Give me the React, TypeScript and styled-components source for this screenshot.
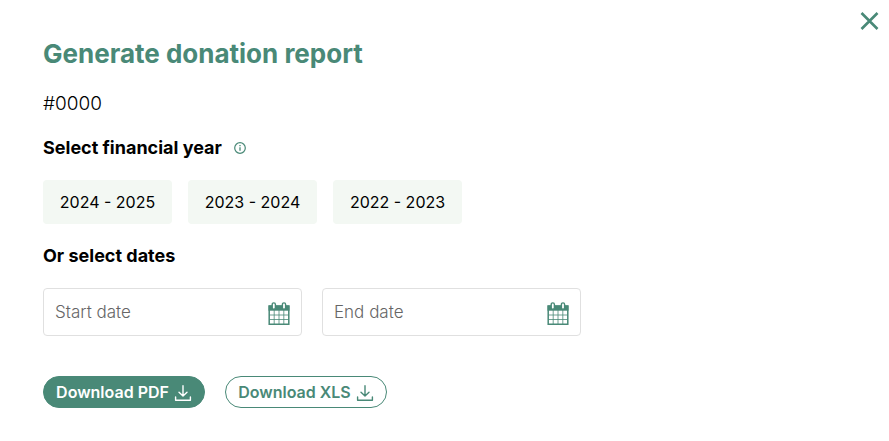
import React, { useState } from "react";
import styled, { createGlobalStyle, css } from "styled-components";

const green = "#498977";

const GlobalStyle = createGlobalStyle`
  *, *::before, *::after { box-sizing: border-box; }
  body { margin: 0; background: #fff; color: #000; font: 400 16px/24px Inter, sans-serif; }
  button, input { font: inherit; color: inherit; }
  button { cursor: pointer; }
`;

const Dialog = styled.section`
  display: grid;
  grid-template-columns: minmax(0, 1fr) auto;
  padding: 0 8px 32px 43px;
`;

const Content = styled.form`
  display: flex;
  flex-direction: column;
  align-items: flex-start;
  padding-top: 36px;
`;

const CloseButton = styled.button`
  display: flex;
  align-self: start;
  margin-top: 9px;
  padding: 0;
  border: 0;
  background: none;
  color: ${green};
`;

const Title = styled.h1`
  margin: 0;
  color: ${green};
  font-size: 26px;
  line-height: 36px;
  font-weight: 700;
`;

const Reference = styled.p`
  margin: 20px 0;
  font-size: 19px;
  font-weight: 300;
`;

const Group = styled.fieldset`
  min-width: 0;
  max-width: 100%;
  margin: 0;
  padding: 0;
  border: 0;
`;

const Legend = styled.legend`
  display: flex;
  align-items: center;
  gap: 12px;
  padding: 0;
  margin-bottom: 20px;
  font-size: 18px;
  font-weight: 700;
`;

const InfoButton = styled.button`
  display: flex;
  padding: 0;
  border: 0;
  background: none;
  color: ${green};
`;

const Years = styled.div`
  display: flex;
  flex-wrap: wrap;
  gap: 16px;
  margin-bottom: 20px;
`;

const YearButton = styled.button<{ $selected: boolean }>`
  min-width: 129px;
  padding: 10px 15px;
  border: 0;
  border-radius: 4px;
  background: ${({ $selected }) => ($selected ? "#d7e8dc" : "#f3f8f3")};
`;

const Dates = styled.div`
  display: flex;
  flex-wrap: wrap;
  gap: 20px;
`;

const DateField = styled.label`
  display: flex;
  align-items: center;
  width: 259px;
  max-width: 100%;
  height: 48px;
  padding: 0 11px;
  border: 1px solid #e0e0e0;
  border-radius: 4px;
  color: ${green};
`;

const DateInput = styled.input`
  flex: 1;
  min-width: 0;
  padding: 0;
  border: 0;
  outline: 0;
  background: none;
  color: #000;
  font-size: 17px;
  font-weight: 300;
  &::placeholder { color: #666; opacity: 1; }
`;

const Actions = styled.div`
  display: flex;
  flex-wrap: wrap;
  gap: 20px;
  margin-top: 40px;
`;

const DownloadButton = styled.button<{ $filled?: boolean }>`
  display: flex;
  align-items: center;
  justify-content: center;
  gap: 5px;
  min-width: 162px;
  height: 32px;
  padding: 0 10px;
  border: 1px solid ${green};
  border-radius: 16px;
  font-size: 16px;
  font-weight: 600;
  ${({ $filled }) =>
    $filled
      ? css`background: ${green}; color: #fff;`
      : css`background: #fff; color: ${green};`}
`;

const CalendarIcon = () => (
  <svg width="22" height="24" viewBox="0 0 22 24" aria-hidden="true">
    <path d="M1.2 4h19.6v18.2H1.2z" fill="#fff" stroke="currentColor" strokeWidth="1.5" />
    <path d="M.5 3.5h21v5.2H.5z" fill="currentColor" />
    <path d="M1 13h20M1 17.5h20M6.2 8v14M11 8v14M15.8 8v14" stroke="currentColor" strokeWidth=".8" fill="none" />
    <rect x="4.2" y=".9" width="3.2" height="6.4" rx="1.5" fill="#fff" stroke="currentColor" strokeWidth="1.4" />
    <rect x="14.4" y=".9" width="3.2" height="6.4" rx="1.5" fill="#fff" stroke="currentColor" strokeWidth="1.4" />
  </svg>
);

const CalendarSlot = styled.span`
  display: flex;
  padding-top: 4px;
`;

const DownloadIcon = () => (
  <svg width="18" height="18" viewBox="0 0 18 18" fill="none" stroke="currentColor" strokeWidth="1.4" strokeLinecap="round" strokeLinejoin="round" aria-hidden="true">
    <path d="M9 2.7v10M5 9.2l4 3.8 4-3.8M1.6 14v3.2h14.8V14" />
  </svg>
);

const InfoIcon = () => (
  <svg width="12" height="12" viewBox="0 0 12 12" fill="none" stroke="currentColor" aria-hidden="true">
    <circle cx="6" cy="6" r="5.3" strokeWidth="1.2" />
    <path d="M6 5.2v3.6M6 3v1.2" strokeWidth="1.3" />
  </svg>
);

const CloseIcon = () => (
  <svg width="24" height="24" viewBox="0 0 24 24" stroke="currentColor" strokeWidth="2.6" aria-hidden="true">
    <path d="m4.5 4 16 16M20.5 4l-16 16" />
  </svg>
);

const years = ["2024 - 2025", "2023 - 2024", "2022 - 2023"];
const dateFields = ["Start date", "End date"];

export default function App() {
  const [year, setYear] = useState("");

  return (
    <>
      <GlobalStyle />
      <Dialog role="dialog" aria-labelledby="report-title">
        <Content onSubmit={(event) => event.preventDefault()}>
          <Title id="report-title">Generate donation report</Title>
          <Reference>#0000</Reference>
          <Group>
            <Legend>
              Select financial year
              <InfoButton type="button" aria-label="About financial years"><InfoIcon /></InfoButton>
            </Legend>
            <Years>
              {years.map((item) => (
                <YearButton key={item} type="button" $selected={year === item} aria-pressed={year === item} onClick={() => setYear(item)}>
                  {item}
                </YearButton>
              ))}
            </Years>
          </Group>
          <Group>
            <Legend>Or select dates</Legend>
            <Dates>
              {dateFields.map((name) => (
                <DateField key={name}>
                  <DateInput type="text" placeholder={name} aria-label={name} />
                  <CalendarSlot><CalendarIcon /></CalendarSlot>
                </DateField>
              ))}
            </Dates>
          </Group>
          <Actions>
            <DownloadButton type="submit" $filled>Download PDF<DownloadIcon /></DownloadButton>
            <DownloadButton type="submit">Download XLS<DownloadIcon /></DownloadButton>
          </Actions>
        </Content>
        <CloseButton type="button" aria-label="Close"><CloseIcon /></CloseButton>
      </Dialog>
    </>
  );
}
